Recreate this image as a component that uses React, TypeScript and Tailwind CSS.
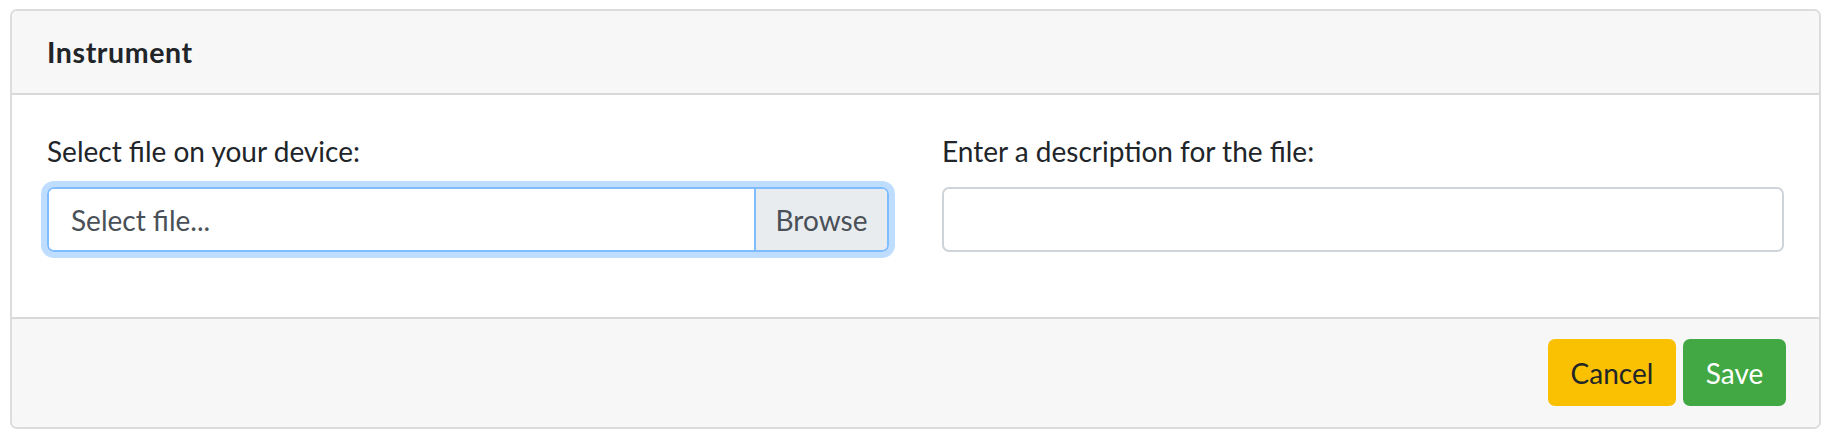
import React from "react";

export default function App() {
  const font = { fontFamily: "Lato, 'Noto Sans', sans-serif" };
  return (
    <div className="w-[1828px] h-[433px] bg-white pt-[9px] pl-[10px] pr-[7px]" style={font}>
      <div className="flex flex-col border-2 border-[#dcdcdc] rounded-[7px] overflow-hidden">
        <div className="h-[84px] flex items-center px-[35px] bg-[#f7f7f7] border-b-2 border-[#d9d9d9]">
          <span className="text-[28.5px] font-bold tracking-[0.6px] text-[#212529] leading-[42px]">Instrument</span>
        </div>
        <div className="bg-white px-[35px] pt-[35px] pb-[65px] grid grid-cols-2 gap-x-[53px]">
          <div className="flex flex-col">
            <label className="text-[28px] leading-[42px] text-[#212529] mb-[15px]">Select file on your device:</label>
            <div className="h-[65px] flex rounded-[7px] border-2 border-[#80bdff] shadow-[0_0_0_6px_rgba(0,123,255,0.25)] overflow-hidden">
              <div className="flex-1 flex items-center pl-[22px] text-[28px] text-[#495057] bg-white">Select file...</div>
              <div className="w-[133px] flex items-center justify-center border-l-2 border-[#80bdff] bg-[#e9ecef] text-[28px] text-[#495057]">Browse</div>
            </div>
          </div>
          <div className="flex flex-col">
            <label className="text-[28px] leading-[42px] text-[#212529] mb-[15px]">Enter a description for the file:</label>
            <input className="h-[65px] rounded-[7px] border-2 border-[#ced4da] bg-white px-[21px] text-[28px] outline-none" />
          </div>
        </div>
        <div className="h-[110px] bg-[#f7f7f7] border-t-2 border-[#d9d9d9] flex justify-end items-start pt-[20px] px-[33px] gap-[7px]">
          <button className="h-[67px] w-[128px] rounded-[7px] bg-[#f9c101] text-[#212529] text-[28px] leading-[42px]">Cancel</button>
          <button className="h-[67px] w-[103px] rounded-[7px] bg-[#42a843] text-white text-[28px] leading-[42px]">Save</button>
        </div>
      </div>
    </div>
  );
}
